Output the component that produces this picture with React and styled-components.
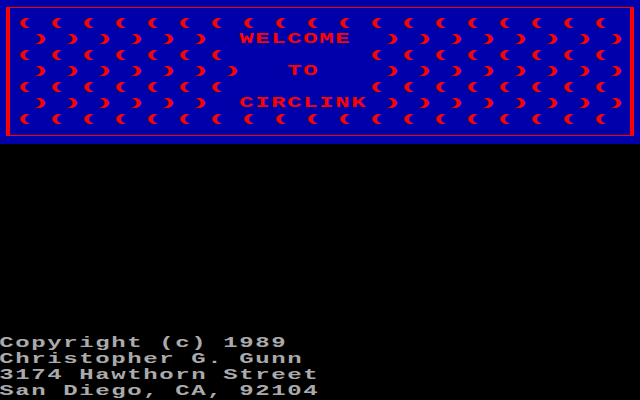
import styled, { createGlobalStyle } from "styled-components";

const GlobalStyle = createGlobalStyle`
  html, body {
    margin: 0;
    padding: 0;
    background: #000000;
  }
`;

const bannerRows = [
  "( ( ( ( ( ( ( ( ( ( ( ( ( ( ( ( ( ( ( ",
  " ) ) ) ) ) )  WELCOME  ) ) ) ) ) ) ) )",
  "( ( ( ( ( ( (         ( ( ( ( ( ( ( ( ",
  " ) ) ) ) ) ) )   TO    ) ) ) ) ) ) ) )",
  "( ( ( ( ( ( (         ( ( ( ( ( ( ( ( ",
  " ) ) ) ) ) )  CIRCLINK ) ) ) ) ) ) ) )",
  "( ( ( ( ( ( ( ( ( ( ( ( ( ( ( ( ( ( ( ",
];

const footerLines = [
  "Copyright (c) 1989",
  "Christopher G. Gunn",
  "3174 Hawthorn Street",
  "San Diego, CA, 92104",
];

// every character sits in a 16x16 cell, like a 40 column text screen
const TextRow = ({ text, color, wide }) => (
  <Row>
    {text.split("").map((ch, i) => (
      <Cell key={i}>
        {ch !== " " && (
          <Glyph
            $bracket={wide && (ch === "(" || ch === ")")}
            $color={color}
          >
            {ch}
          </Glyph>
        )}
      </Cell>
    ))}
  </Row>
);

const App = () => {
  return (
    <Screen>
      <GlobalStyle />
      <Banner>
        <Frame>
          {bannerRows.map((row, i) => (
            <TextRow key={i} text={row} color="#ff0000" wide />
          ))}
        </Frame>
      </Banner>
      <Footer>
        {footerLines.map((line, i) => (
          <TextRow key={i} text={line} color="#aaaaaa" />
        ))}
      </Footer>
    </Screen>
  );
};

const Screen = styled.div`
  width: 640px;
  height: 400px;
  background: #000000;
  display: flex;
  flex-direction: column;
  overflow: hidden;
`;

const Banner = styled.div`
  box-sizing: border-box;
  height: 144px;
  padding: 7px 6px 8px;
  background: #0000aa;
`;

const Frame = styled.div`
  box-sizing: border-box;
  height: 129px;
  padding: 8px 6px 7px;
  border-style: solid;
  border-color: #ff0000;
  border-width: 1px 4px 1px 4px;
  display: flex;
  flex-direction: column;
`;

const Footer = styled.div`
  margin-top: auto;
  display: flex;
  flex-direction: column;
`;

const Row = styled.div`
  display: flex;
  height: 16px;
`;

const Cell = styled.span`
  width: 16px;
  height: 16px;
  flex: none;
  display: flex;
  justify-content: center;
  line-height: 16px;
`;

const Glyph = styled.span`
  display: inline-block;
  font-family: "Liberation Mono", monospace;
  font-weight: bold;
  color: ${(p) => p.$color};
  font-size: ${(p) => (p.$bracket ? "11px" : "15px")};
  transform: ${(p) =>
    p.$bracket ? "translateY(-1px) scaleX(3)" : "translateX(-1px) scaleX(1.6)"};
  white-space: pre;
`;

export default App;
